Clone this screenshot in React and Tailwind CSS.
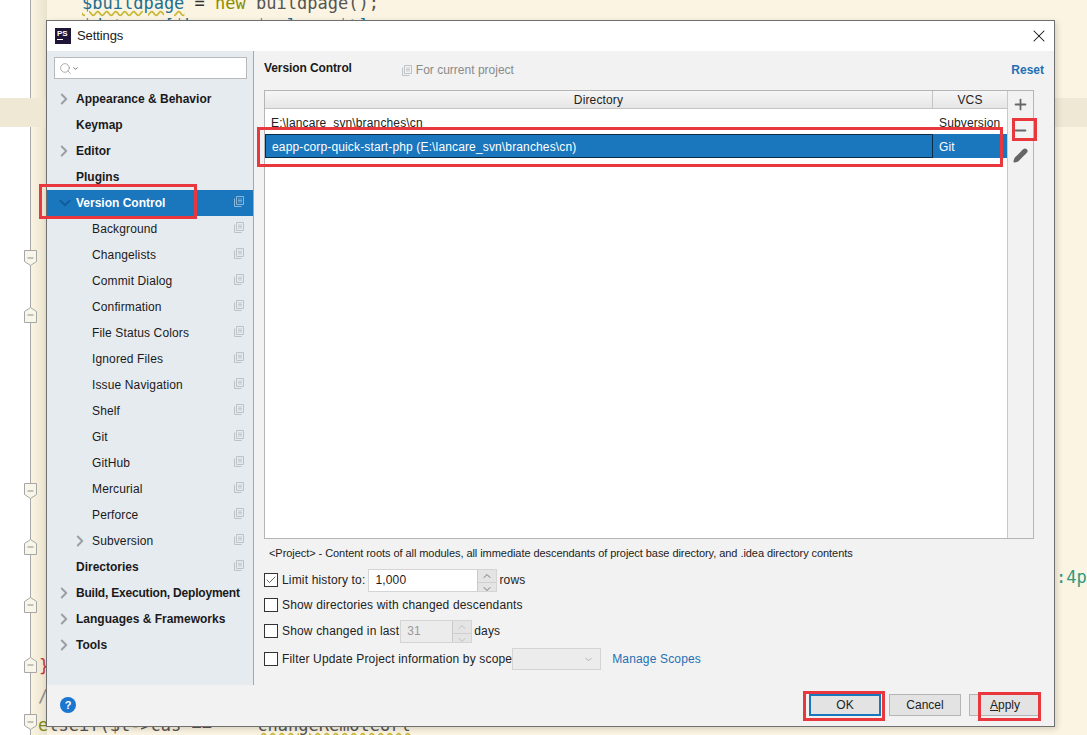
import { Search, ChevronDown, ChevronRight, ChevronUp, X, Plus, Minus, Pencil, Check } from "lucide-react";

const font = { fontFamily: '"Liberation Sans", Arial, sans-serif' };
const mono = { fontFamily: '"DejaVu Sans Mono", monospace' };

const navItems = [
  { label: "Appearance & Behavior", bold: true, arrow: "right" },
  { label: "Keymap", bold: true },
  { label: "Editor", bold: true, arrow: "right" },
  { label: "Plugins", bold: true },
  { label: "Version Control", bold: true, arrow: "down", selected: true, copy: true },
  { label: "Background", sub: true, copy: true },
  { label: "Changelists", sub: true, copy: true },
  { label: "Commit Dialog", sub: true, copy: true },
  { label: "Confirmation", sub: true, copy: true },
  { label: "File Status Colors", sub: true, copy: true },
  { label: "Ignored Files", sub: true, copy: true },
  { label: "Issue Navigation", sub: true, copy: true },
  { label: "Shelf", sub: true, copy: true },
  { label: "Git", sub: true, copy: true },
  { label: "GitHub", sub: true, copy: true },
  { label: "Mercurial", sub: true, copy: true },
  { label: "Perforce", sub: true, copy: true },
  { label: "Subversion", sub: true, copy: true, arrow: "subright" },
  { label: "Directories", bold: true, copy: true },
  { label: "Build, Execution, Deployment", bold: true, arrow: "right", tight: true },
  { label: "Languages & Frameworks", bold: true, arrow: "right" },
  { label: "Tools", bold: true, arrow: "right" },
];

const foldMarks = [
  { y: 258, down: true },
  { y: 315 },
  { y: 491, down: true },
  { y: 547 },
  { y: 605 },
  { y: 665 },
  { y: 722, down: true },
];

const CopyIcon = ({ light }) => (
  <svg width="11" height="11" viewBox="0 0 11 11" fill="none" stroke={light ? "#8fb8d8" : "#bdc2c6"} strokeWidth="1">
    <path d="M2.5 0.5h7v8h-7z" />
    <path d="M0.5 2.5v8h7" />
    <path d="M4 3h4M4 4.5h4M4 6h4" strokeWidth="0.8" />
  </svg>
);

const FoldMark = ({ y, down }) => (
  <svg className="absolute left-[23px]" style={{ top: y - 9 }} width="15" height="18" viewBox="0 0 15 18" fill="#f8f5e9" stroke="#a6a6a6">
    <path d={down ? "M1.5 1.5h12v11l-6 4l-6-4z" : "M1.5 16.5h12v-11l-6-4l-6 4z"} />
    <path d="M4.5 9h6" stroke="#8f8f8f" />
  </svg>
);

const NavRow = ({ item }) => (
  <div className={`relative flex h-[26px] items-center text-xs ${item.selected ? "bg-[#1a76bd] text-white" : "text-[#1a1a1a]"} ${item.bold ? "font-bold" : "tracking-[0.13px]"} ${item.tight ? "tracking-[-0.2px]" : ""}`}>
    {item.arrow === "right" && <ChevronRight size={18} strokeWidth={2.5} className="absolute left-[8px] text-[#9a9ea2]" />}
    {item.arrow === "subright" && <ChevronRight size={18} strokeWidth={2.5} className="absolute left-[24px] text-[#9a9ea2]" />}
    {item.arrow === "down" && <ChevronDown size={18} strokeWidth={2.5} className="absolute left-[9px] text-[#0f5d99]" />}
    <span className={item.sub ? "ml-[45px]" : "ml-[29px]"}>{item.label}</span>
    {item.copy && (
      <span className="absolute left-[187px] top-[6px] flex">
        <CopyIcon light={item.selected} />
      </span>
    )}
  </div>
);

const Checkbox = ({ checked }) => (
  <span className="flex h-[14px] w-[14px] shrink-0 items-center justify-center border border-[#333] bg-white">
    {checked && <Check size={12} strokeWidth={1.5} className="text-[#333]" />}
  </span>
);

const Spinner = ({ value, disabled, width }) => (
  <div className={`flex h-[23px] ${width} border border-[#d4d4d4] text-xs ${disabled ? "bg-[#ececec] text-[#9a9a9a]" : "bg-white text-[#1a1a1a]"}`}>
    <span className="flex flex-1 items-center pl-1.5">{value}</span>
    <div className="flex w-[19px] flex-col border-l border-[#c9c9c9] bg-[#e4e4e4]">
      <span className="flex flex-1 items-center justify-center border-b border-[#cfcfcf]">
        <ChevronUp size={12} className={disabled ? "text-[#c0c0c0]" : "text-[#777]"} />
      </span>
      <span className="flex flex-1 items-center justify-center">
        <ChevronDown size={12} className={disabled ? "text-[#c0c0c0]" : "text-[#777]"} />
      </span>
    </div>
  </div>
);

const Mark = ({ className }) => (
  <div className={`pointer-events-none absolute border-[3px] border-[#e8373d] ${className}`} />
);

// code peeking out around the dialog
const Backdrop = () => (
  <div className="absolute inset-0 overflow-hidden bg-[#fbf4e2]">
    <div className="absolute left-0 top-0 h-full w-[31px] border-r border-[#a8a8a8] bg-white" />
    <div className="absolute left-[31px] top-0 h-full w-[16px] bg-gradient-to-r from-[#fbf4e2] to-[#e9e2cd]" />
    <div className="absolute left-0 top-[98px] h-[29px] w-[47px] bg-[#efe8d5]" />
    <div className="absolute left-[1054px] top-[98px] h-[29px] w-[33px] bg-[#efe8d4]" />
    {foldMarks.map((m) => (
      <FoldMark key={m.y} y={m.y} down={m.down} />
    ))}
    <span className="absolute left-[82px] top-[-9px] whitespace-nowrap text-[17px] text-[#1c6f92]" style={mono}>
      <span className="underline decoration-wavy decoration-[#c9b93a]">$buildpage</span> <span className="text-[#333]">=</span> <span className="text-[#8c8c00]">new</span> <span className="text-[#555]">buildpage();</span>
    </span>
    <span className="absolute left-[82px] top-[14px] whitespace-nowrap text-[17px] text-[#1c6f92]" style={mono}>$data = [$key =&gt; $value, $t];</span>
    <span className="absolute left-[39px] top-[654px] text-[17px] text-[#c83232]" style={mono}>{"}"}</span>
    <span className="absolute left-[38px] top-[684px] text-[17px] text-[#888]" style={mono}>/</span>
    <span className="absolute left-[38px] top-[713px] whitespace-nowrap text-[17px] text-[#555]" style={mono}>
      <span className="text-[#7d8a10]">e</span>lseif($t-&gt;cas == <span className="ml-[35px] underline decoration-wavy decoration-[#c9b93a]">changeRemoteUrl</span>
    </span>
    <span className="absolute left-[1056px] top-[565px] text-[17px] text-[#2f9a80]" style={mono}>:4p</span>
  </div>
);

export default function App() {
  return (
    <div className="relative h-[735px] w-[1087px] overflow-hidden" style={font}>
      <Backdrop />

      <div className="absolute left-[46px] top-[20px] flex h-[707px] w-[1009px] flex-col border border-[#6f6f6f] bg-[#f2f2f2] shadow-[2px_2px_6px_rgba(0,0,0,0.15)]">
        {/* title bar */}
        <div className="flex h-[30px] shrink-0 items-center bg-white pl-[8px] pr-[5px]">
          <div className="flex h-[16px] w-[16px] flex-col bg-[#1f1536] pl-[2px] pt-[1px] text-[8px] font-bold leading-[9px] text-white">
            PS
            <span className="mt-[1px] h-px w-[6px] bg-white" />
          </div>
          <span className="ml-[6px] text-[13px] tracking-[-0.1px] text-[#222]">Settings</span>
          <X size={20} strokeWidth={1.25} className="ml-auto text-[#111]" />
        </div>

        <div className="flex min-h-0 flex-1">
          {/* sidebar */}
          <div className="flex w-[207px] shrink-0 flex-col border-r border-[#a7a7a7] bg-[#e6ebf0]">
            <div className="mb-[7px] ml-[7px] mr-[6px] mt-[6px] flex h-[22px] items-center border border-[#b9b9b9] bg-white pl-[4px] text-[#8c8c8c]">
              <Search size={13} strokeWidth={1.25} />
              <ChevronDown size={7} strokeWidth={3} className="text-[#666]" />
            </div>
            <div>
              {navItems.map((item) => (
                <NavRow key={item.label} item={item} />
              ))}
            </div>
          </div>

          {/* content */}
          <div className="flex min-w-0 flex-1 flex-col pl-[10px] pr-[10px]">
            <div className="flex h-[39px] shrink-0 items-start pt-[9px] text-xs">
              <span className="font-bold tracking-[-0.1px] text-[#1a1a1a]">Version Control</span>
              <span className="ml-[50px] mt-[2px] flex items-center gap-[3px] text-[#8a8a8a]">
                <CopyIcon /> For current project
              </span>
              <span className="ml-auto mt-[2px] font-bold text-[#2470b3]">Reset</span>
            </div>

            <div className="mr-[10px] flex h-[449px] shrink-0 border border-[#b5b5b5] bg-white">
              <div className="min-w-0 flex-1 border-r border-[#c9c9c9] text-xs tracking-[0.14px]">
                <div className="flex h-[18px] border-b border-[#c4c4c4] bg-gradient-to-b from-[#f6f6f6] to-[#e6e6e6] text-[#222]">
                  <span className="flex w-[668px] items-center justify-center border-r border-[#c4c4c4]">Directory</span>
                  <span className="flex flex-1 items-center justify-center">VCS</span>
                </div>
                <div className="flex h-[25px] pt-[6px] text-[#222]">
                  <span className="w-[668px] pl-[6px]">E:\lancare_svn\branches\cn</span>
                  <span className="pl-[6px]">Subversion</span>
                </div>
                <div className="flex h-[24px] bg-[#1a76bd] text-white">
                  <span className="flex w-[668px] items-center border border-[#0b2a44] pl-[6px] pt-[1px]">eapp-corp-quick-start-php (E:\lancare_svn\branches\cn)</span>
                  <span className="flex items-center pl-[6px] pt-[1px]">Git</span>
                </div>
              </div>
              <div className="flex w-[25px] shrink-0 flex-col items-center gap-[9px] bg-[#f2f2f2] pt-[5px] text-[#666]">
                <Plus size={17} strokeWidth={2.5} />
                <Minus size={17} strokeWidth={2.5} />
                <Pencil size={15} strokeWidth={2.5} fill="currentColor" />
              </div>
            </div>

            <div className="flex h-[29px] shrink-0 items-center pl-[5px] text-[11px] tracking-[-0.06px] text-[#222]">
              &lt;Project&gt; - Content roots of all modules, all immediate descendants of project base directory, and .idea directory contents
            </div>

            <div className="flex flex-col text-xs tracking-[0.16px] text-[#222]">
              <div className="flex h-[24px] items-center">
                <Checkbox checked />
                <span className="ml-[4px] mr-[3px]">Limit history to:</span>
                <Spinner value="1,000" width="w-[129px]" />
                <span className="ml-[2px]">rows</span>
              </div>
              <div className="mt-[1px] flex h-[24px] items-center">
                <Checkbox />
                <span className="ml-[4px]">Show directories with changed descendants</span>
              </div>
              <div className="mt-[2px] flex h-[24px] items-center">
                <Checkbox />
                <span className="ml-[4px] mr-[1px]">Show changed in last</span>
                <Spinner value="31" disabled width="w-[72px]" />
                <span className="ml-[2px]">days</span>
              </div>
              <div className="mt-[4px] flex h-[24px] items-center">
                <Checkbox />
                <span className="ml-[4px]">Filter Update Project information by scope</span>
                <div className="flex h-[22px] w-[89px] items-center justify-end border border-[#d4d4d4] bg-[#ececec] pr-[6px]">
                  <ChevronDown size={11} className="text-[#a8a8a8]" />
                </div>
                <span className="ml-[11px] text-[#2470b3]">Manage Scopes</span>
              </div>
            </div>
          </div>
        </div>

        {/* footer */}
        <div className="flex h-[41px] shrink-0 items-center bg-[#f2f2f2] pb-[1px] pl-[13px] pr-[13px] text-xs text-[#222]">
          <span className="flex h-4 w-4 items-center justify-center rounded-full bg-[#1a76cf] text-[11px] font-bold text-white">?</span>
          <button className="ml-auto h-[22px] w-[72px] border-2 border-[#1a76bd] bg-[#e3e3e3]">OK</button>
          <button className="ml-[8px] h-[22px] w-[72px] border border-[#b5b5b5] bg-[#e3e3e3]">Cancel</button>
          <button className="ml-[8px] h-[22px] w-[72px] border border-[#b5b5b5] bg-[#e3e3e3]">
            <span className="underline">A</span>pply
          </button>
        </div>
      </div>

      {/* red annotation boxes */}
      <Mark className="left-[39px] top-[184px] h-[35px] w-[158px]" />
      <Mark className="left-[257px] top-[127px] h-[40px] w-[746px]" />
      <Mark className="left-[1012px] top-[118px] h-[23px] w-[25px]" />
      <Mark className="left-[803px] top-[691px] h-[30px] w-[82px]" />
      <Mark className="left-[978px] top-[692px] h-[29px] w-[63px]" />
    </div>
  );
}
